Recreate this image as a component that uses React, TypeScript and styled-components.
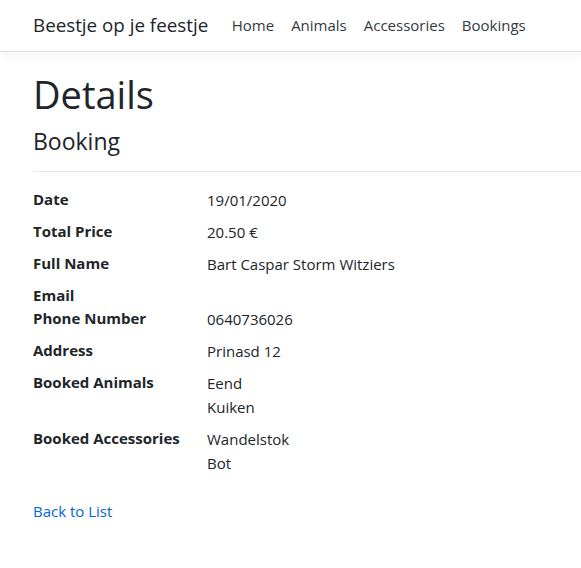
import { Fragment } from 'react';
import styled, { createGlobalStyle } from 'styled-components';

const GlobalStyle = createGlobalStyle`
  html, body {
    margin: 0;
    padding: 0;
    background: #fff;
  }
  body {
    font-family: "Open Sans", "Noto Sans", sans-serif;
    font-size: 16px;
    line-height: 1.5;
    color: #212529;
  }
`;

const Navbar = styled.nav`
  display: flex;
  align-items: center;
  height: 52px;
  box-sizing: border-box;
  padding: 0 33px;
  border-bottom: 1px solid #dee2e6;
  box-shadow: 0 4px 12px rgba(0, 0, 0, 0.05);
  background: #fff;
`;

const Brand = styled.a`
  font-size: 18.8px;
  color: #212529;
  text-decoration: none;
  margin-right: 15px;
  white-space: nowrap;
`;

const NavList = styled.ul`
  display: flex;
  list-style: none;
  margin: 0;
  padding: 0;
`;

const NavLink = styled.a`
  display: block;
  padding: 8px 8.5px;
  font-size: 15px;
  color: #343a40;
  text-decoration: none;
`;

const Main = styled.main`
  padding: 0 0 0 33px;
`;

const Title = styled.h1`
  margin: 0;
  padding-top: 20px;
  font-size: 38px;
  font-weight: 400;
  line-height: 1.2;
`;

const Subtitle = styled.h4`
  margin: 10px 0 0;
  font-size: 23px;
  font-weight: 400;
  line-height: 1.2;
`;

const Rule = styled.hr`
  margin: 16px 0;
  border: 0;
  border-top: 1px solid rgba(0, 0, 0, 0.1);
`;

const DetailList = styled.dl`
  display: grid;
  grid-template-columns: 174px 1fr;
  margin: 0 0 16px;
  font-size: 15px;
`;

const Term = styled.dt<{ $bare?: boolean }>`
  grid-column: 1;
  font-weight: 700;
  margin-bottom: ${({ $bare }) => ($bare ? '0' : '8px')};
`;

const Desc = styled.dd`
  grid-column: 2;
  margin: 0 0 8px;
`;

const Line = styled.div`
  line-height: 24px;
`;

const BackLink = styled.a`
  display: inline-block;
  font-size: 15px;
  color: #0366d6;
  text-decoration: none;
`;

const details: { label: string; values: string[] }[] = [
  { label: 'Date', values: ['19/01/2020'] },
  { label: 'Total Price', values: ['20.50 €'] },
  { label: 'Full Name', values: ['Bart Caspar Storm Witziers'] },
  { label: 'Email', values: [] },
  { label: 'Phone Number', values: ['0640736026'] },
  { label: 'Address', values: ['Prinasd 12'] },
  { label: 'Booked Animals', values: ['Eend', 'Kuiken'] },
  { label: 'Booked Accessories', values: ['Wandelstok', 'Bot'] },
];

export default function App() {
  return (
    <>
      <GlobalStyle />
      <Navbar>
        <Brand href="#">Beestje op je feestje</Brand>
        <NavList>
          {['Home', 'Animals', 'Accessories', 'Bookings'].map((item) => (
            <li key={item}>
              <NavLink href="#">{item}</NavLink>
            </li>
          ))}
        </NavList>
      </Navbar>
      <Main>
        <Title>Details</Title>
        <Subtitle>Booking</Subtitle>
        <Rule />
        <DetailList>
          {details.map((d) => (
            <Fragment key={d.label}>
              <Term $bare={d.values.length === 0}>{d.label}</Term>
              {d.values.length > 0 && (
                <Desc>
                  {d.values.map((v) => (
                    <Line key={v}>{v}</Line>
                  ))}
                </Desc>
              )}
            </Fragment>
          ))}
        </DetailList>
        <BackLink href="#">Back to List</BackLink>
      </Main>
    </>
  );
}
